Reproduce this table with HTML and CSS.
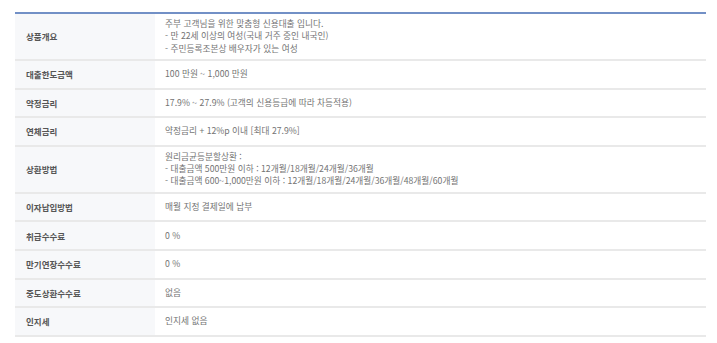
FILE: index.html
```html
<!DOCTYPE html>
<html lang="ko">
<head>
<meta charset="utf-8">
<link rel="stylesheet" href="styles.css">
</head>
<body>
<div class="page">
<table class="info">
<tbody>
<tr class="tall"><th>상품개요</th><td>주부 고객님을 위한 맞춤형 신용대출 입니다.<br>- 만 22세 이상의 여성(국내 거주 중인 내국인)<br>- 주민등록조본상 배우자가 있는 여성</td></tr>
<tr><th>대출한도금액</th><td>100 만원 ~ 1,000 만원</td></tr>
<tr><th>약정금리</th><td>17.9% ~ 27.9% (고객의 신용등급에 따라 차등적용)</td></tr>
<tr><th>연체금리</th><td>약정금리 + 12%p 이내 [최대 27.9%]</td></tr>
<tr class="tall"><th>상환방법</th><td>원리금균등분할상환 :<br>- 대출금액 500만원 이하 : 12개월/18개월/24개월/36개월<br>- 대출금액 600~1,000만원 이하 : 12개월/18개월/24개월/36개월/48개월/60개월</td></tr>
<tr><th>이자납입방법</th><td>매월 지정 결제일에 납부</td></tr>
<tr><th>취급수수료</th><td>0 %</td></tr>
<tr><th>만기연장수수료</th><td>0 %</td></tr>
<tr><th>중도상환수수료</th><td>없음</td></tr>
<tr><th>인지세</th><td>인지세 없음</td></tr>
</tbody>
</table>
</div>
</body>
</html>
```
FILE: styles.css
```css
html, body {
  margin: 0;
  padding: 0;
  background: #ffffff;
}
.page {
  padding: 12px 11px 0 15px;
}
.info {
  width: 691px;
  border-collapse: collapse;
  border-top: 2px solid #7290c6;
  font-family: "Noto Sans CJK KR", "Noto Sans", sans-serif;
  font-size: 8.7px;
  line-height: 12.2px;
  table-layout: fixed;
}
.info th {
  width: 140px;
  box-sizing: border-box;
  background: #f7f8fa;
  color: #555555;
  font-size: 8.5px;
  font-weight: bold;
  text-align: left;
  padding: 0 0 0 11px;
  height: 26.6px;
  border-bottom: 2px solid #e9e9e9;
}
.info td {
  color: #737373;
  padding: 0 0 0 10px;
  height: 26.6px;
  border-bottom: 2px solid #e9e9e9;
  vertical-align: middle;
}
.info tr.tall th,
.info tr.tall td {
  height: 45px;
}
```
